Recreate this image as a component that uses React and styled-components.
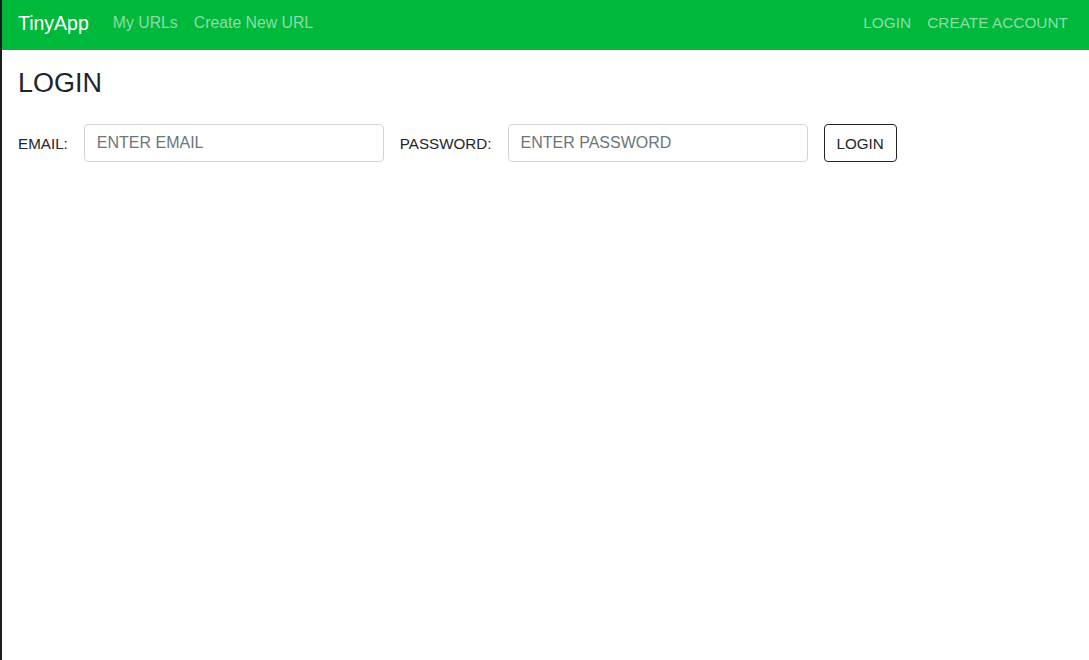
import React from "react";
import styled, { createGlobalStyle } from "styled-components";

const GlobalStyle = createGlobalStyle`
  html, body {
    margin: 0;
    padding: 0;
    background: #ffffff;
  }
  body {
    font-family: "Liberation Sans", Arial, sans-serif;
    color: #212529;
  }
`;

const Page = styled.div`
  min-height: 100vh;
  border-left: 2px solid #1c1c1c;
  box-sizing: border-box;
`;

const Navbar = styled.nav`
  height: 50px;
  box-sizing: border-box;
  padding: 0 21px 4px 16px;
  background: #00b83c;
  display: flex;
  align-items: center;
  justify-content: space-between;
`;

const NavGroup = styled.div`
  display: flex;
  align-items: center;
  gap: 16px;
`;

const Brand = styled.a`
  font-size: 19.5px;
  color: #ffffff;
  margin-right: 8px;
  text-decoration: none;
`;

const NavLink = styled.a`
  font-size: ${(props) => (props.$caps ? "15.4px" : "15.8px")};
  color: rgba(255, 255, 255, 0.55);
  text-decoration: none;
`;

const Content = styled.main`
  padding: 17px 16px 0;
`;

const Heading = styled.h3`
  margin: 0 0 25px;
  font-size: 27px;
  font-weight: 500;
  line-height: 1.2;
  color: #212529;
`;

const Form = styled.form`
  display: flex;
  align-items: center;
  gap: 16px;
`;

const Field = styled.label`
  display: flex;
  align-items: center;
  gap: 16px;
  font-size: 15.2px;
  color: #212529;
`;

const Input = styled.input`
  width: 300px;
  height: 38px;
  box-sizing: border-box;
  border: 1px solid #ced4da;
  border-radius: 4px;
  padding: 0 12px;
  font-family: "Liberation Sans", Arial, sans-serif;
  font-size: 16px;
  color: #495057;

  &::placeholder {
    color: #6c757d;
  }
`;

const Button = styled.button`
  height: 38px;
  padding: 0 12px;
  background: #ffffff;
  border: 1px solid #212529;
  border-radius: 4px;
  font-family: "Liberation Sans", Arial, sans-serif;
  font-size: 15.2px;
  color: #212529;
`;

const App = () => {
  return (
    <Page>
      <GlobalStyle />
      <Navbar>
        <NavGroup>
          <Brand>TinyApp</Brand>
          <NavLink>My URLs</NavLink>
          <NavLink>Create New URL</NavLink>
        </NavGroup>
        <NavGroup>
          <NavLink $caps>LOGIN</NavLink>
          <NavLink $caps>CREATE ACCOUNT</NavLink>
        </NavGroup>
      </Navbar>
      <Content>
        <Heading>LOGIN</Heading>
        <Form onSubmit={(e) => e.preventDefault()}>
          <Field>
            EMAIL:
            <Input type="email" placeholder="ENTER EMAIL" />
          </Field>
          <Field>
            PASSWORD:
            <Input type="password" placeholder="ENTER PASSWORD" />
          </Field>
          <Button type="submit">LOGIN</Button>
        </Form>
      </Content>
    </Page>
  );
};

export default App;
